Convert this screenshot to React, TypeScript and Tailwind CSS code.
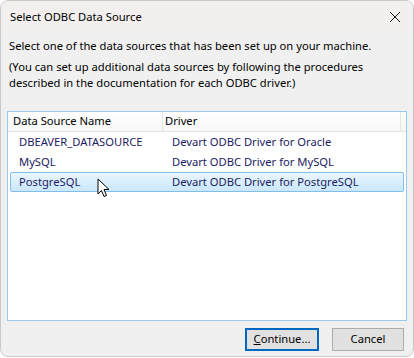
import React from "react";

const font = { fontFamily: '"Segoe UI", "Noto Sans", Arial, sans-serif' };

function Cursor() {
  return (
    <svg width="14" height="20" viewBox="0 0 14 20" className="absolute left-[86px] top-[5px]">
      <path d="M1 1 L1 16 L4.5 12.5 L7 18.5 L9.5 17.5 L7 11.5 L12 11.5 Z" fill="#ffffff" stroke="#000000" strokeWidth="1" strokeLinejoin="miter" />
    </svg>
  );
}

export default function App() {
  const rows = [
    ["DBEAVER_DATASOURCE", "Devart ODBC Driver for Oracle"],
    ["MySQL", "Devart ODBC Driver for MySQL"],
    ["PostgreSQL", "Devart ODBC Driver for PostgreSQL"],
  ];
  return (
    <div className="w-[414px] h-[358px] bg-white" style={font}>
      <div className="w-[414px] h-[357px] rounded-[8px] border border-[#c9c9c9] bg-[#f0f0f0] overflow-hidden flex flex-col text-[11.2px] text-black">
        <div className="h-[31px] bg-[#f3efee] flex items-center justify-between pl-[9px] pr-[12px] shrink-0">
          <span className="leading-none">Select ODBC Data Source</span>
          <svg width="12" height="12" viewBox="0 0 12 12">
            <path d="M1 1 L11 11 M11 1 L1 11" stroke="#1a1a1a" strokeWidth="1" />
          </svg>
        </div>
        <div className="px-[6px] pt-[6px] flex flex-col flex-1">
          <p className="leading-[16px] pl-[2px]">Select one of the data sources that has been set up on your machine.</p>
          <p className="leading-[16px] pl-[2px] mt-[5px]">
            (You can set up additional data sources by following the procedures
            <br />
            described in the documentation for each ODBC driver.)
          </p>
          <div className="mt-[20px] h-[210px] border border-[#99c9ec] bg-white flex flex-col">
            <div className="h-[20px] shrink-0 flex items-stretch bg-gradient-to-b from-white to-[#f6f7f8] border-b border-[#e5e5e5]">
              <div className="w-[155px] pl-[5px] flex items-center border-r border-[#e5e5e5]">Data Source Name</div>
              <div className="w-[238px] pl-[2px] flex items-center border-r border-[#e5e5e5]">Driver</div>
            </div>
            <div className="px-[2px] flex flex-col text-[#1b1b62]">
              {rows.map((r, i) => (
                <div
                  key={i}
                  className={
                    i === 2
                      ? "relative h-[20px] flex items-center rounded-[2px] border border-[#84bde9] bg-gradient-to-b from-[#eaf6fe] to-[#c9e7fb]"
                      : "relative h-[20px] flex items-center border border-transparent"
                  }
                >
                  <div className="w-[153px] pl-[8px]">{r[0]}</div>
                  <div className="pl-[8px]">{r[1]}</div>
                  {i === 2 && <Cursor />}
                </div>
              ))}
            </div>
          </div>
          <div className="flex justify-end gap-[13px] mt-[7px] pr-[3px]">
            <button className="w-[74px] h-[23px] border-2 border-[#0067c0] bg-[#e1e1e1] flex items-center justify-center">
              <span><span className="underline">C</span>ontinue...</span>
            </button>
            <button className="w-[72px] h-[23px] border border-[#adadad] bg-[#e1e1e1] flex items-center justify-center">
              Cancel
            </button>
          </div>
        </div>
      </div>
    </div>
  );
}
